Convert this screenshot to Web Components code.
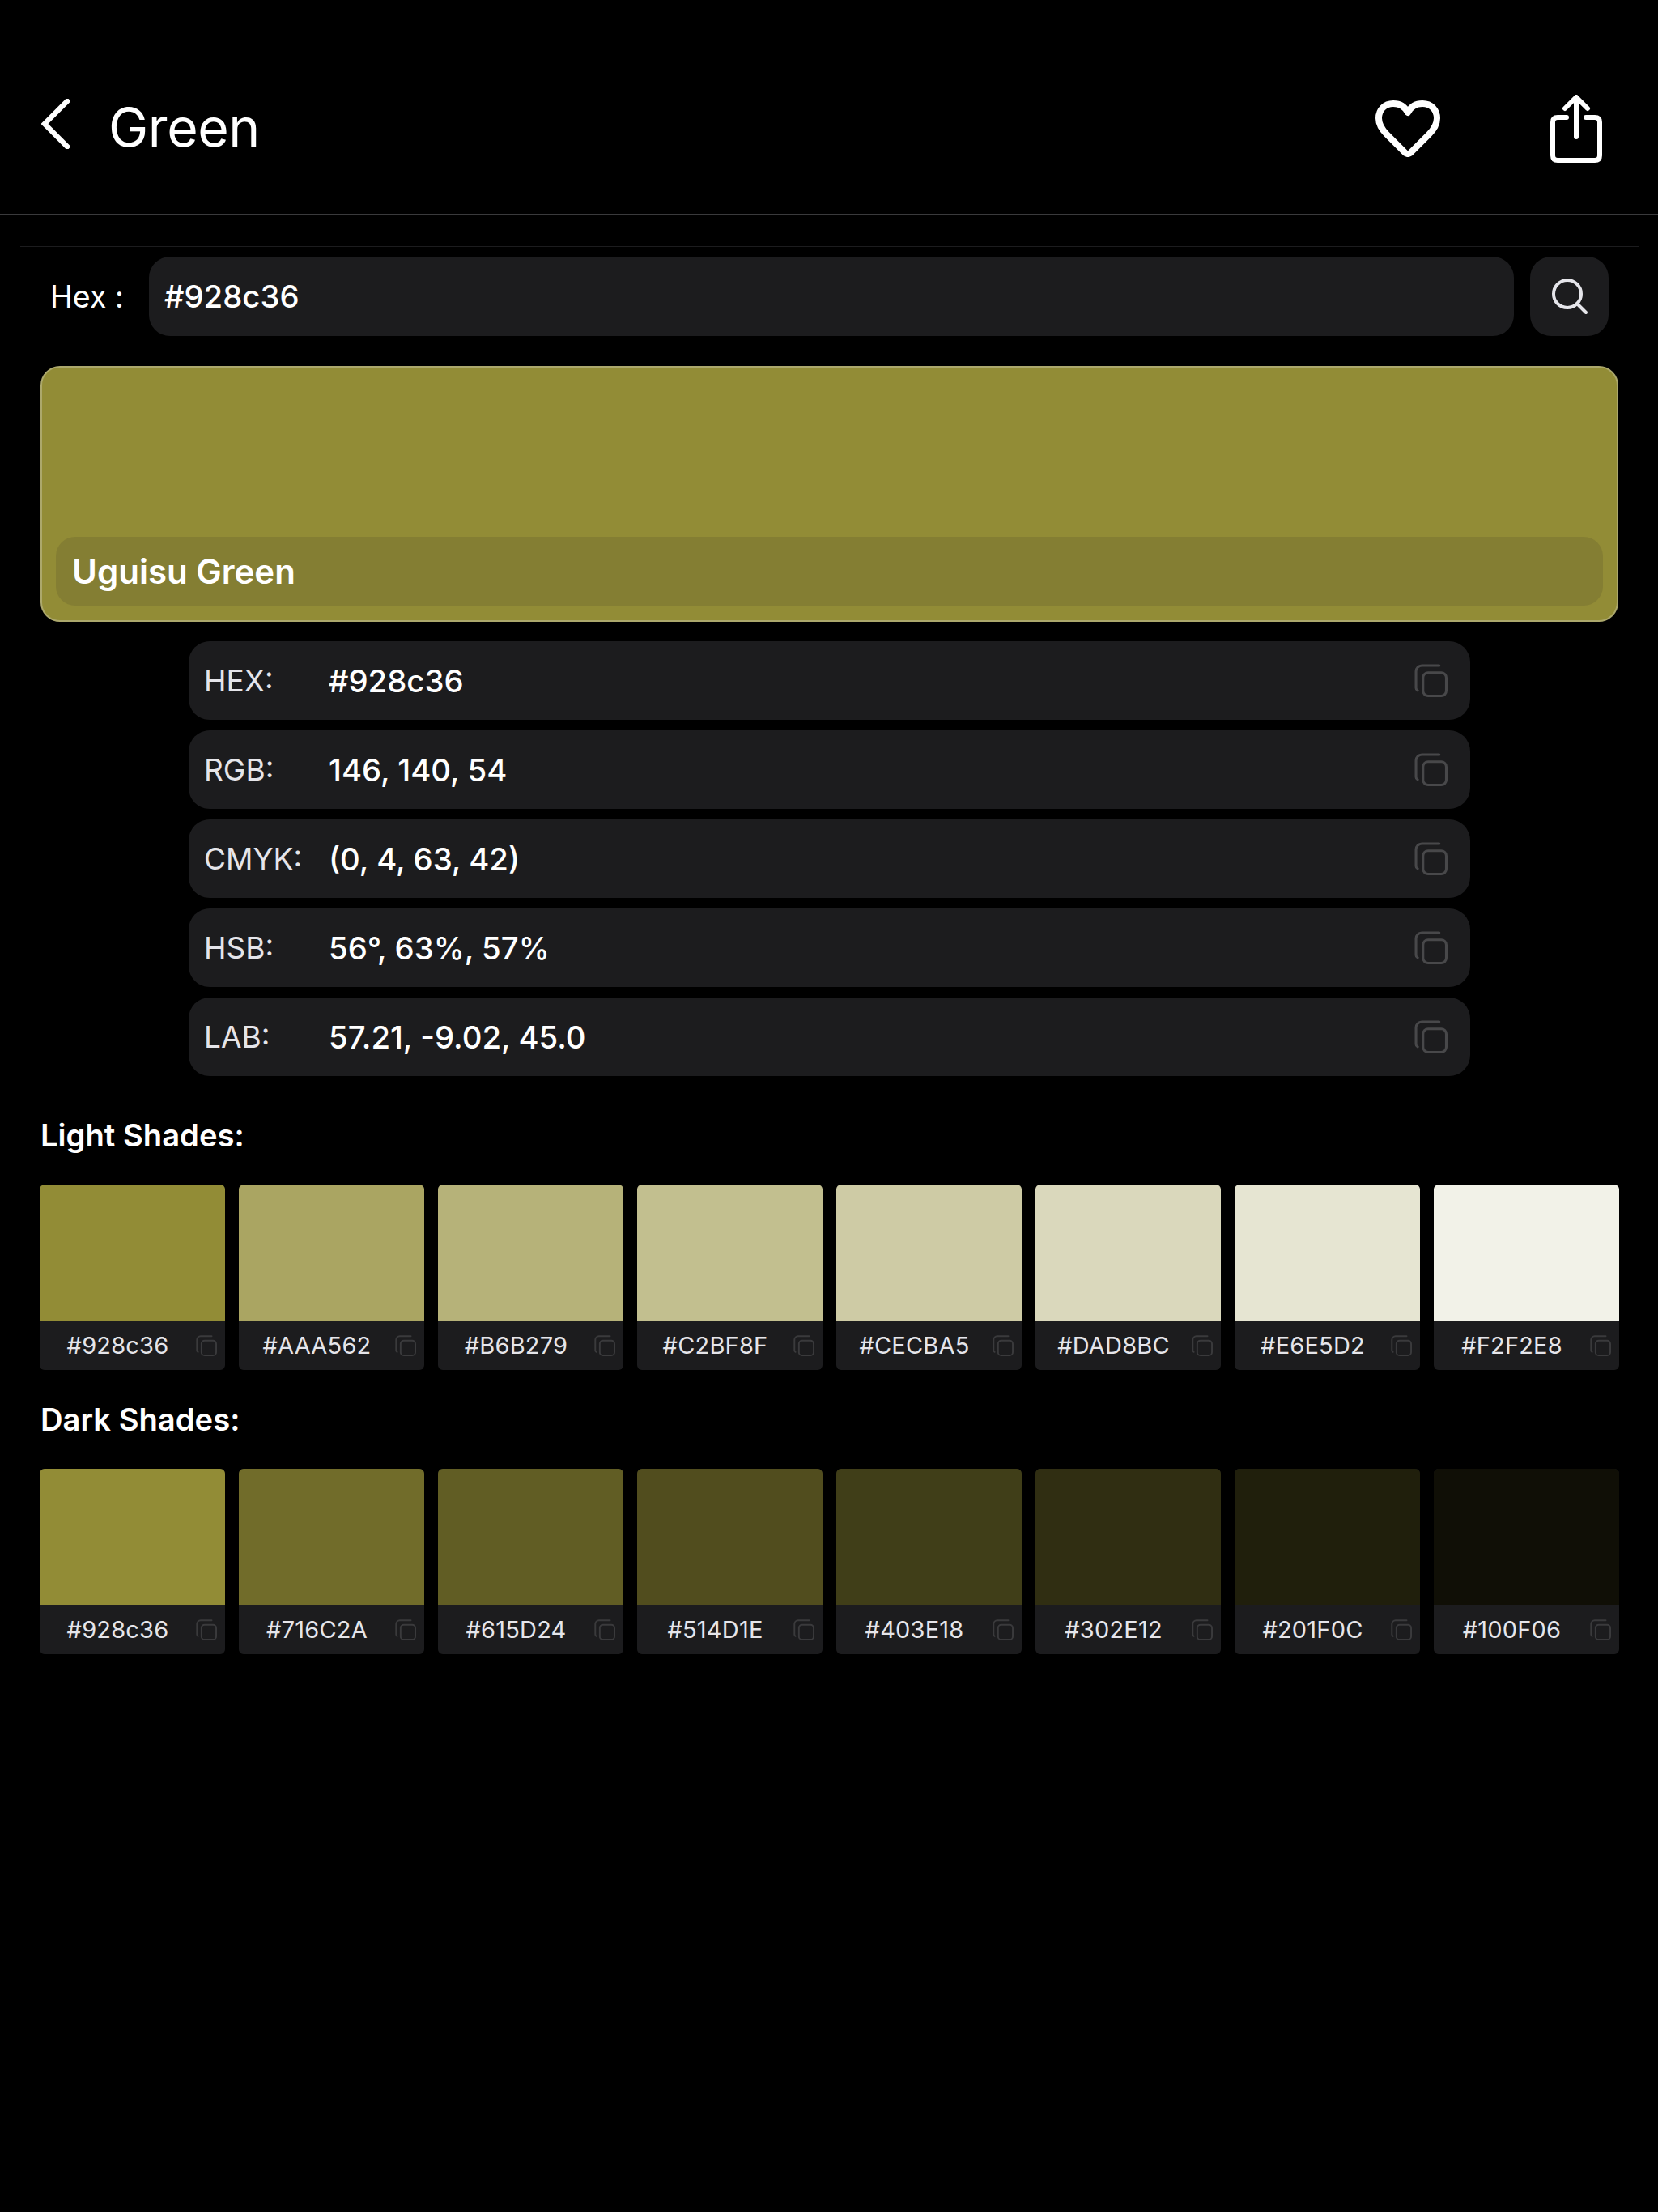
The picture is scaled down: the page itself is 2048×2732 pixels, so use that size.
<!DOCTYPE html>
<html lang="en">
<head>
<meta charset="utf-8">
<title>Green</title>
<style>
    html, body { margin: 0; background: #000; }
    body { width: 2048px; height: 2732px; overflow: hidden; color: #fff; font-family: Inter, "Liberation Sans", sans-serif; }
</style>
</head>
<body>
<color-page>
    <color-header>Green</color-header>
    <hex-search>#928c36</hex-search>
    <color-card>Uguisu Green</color-card>
    <value-list>
        <value-row label="HEX:">#928c36</value-row>
        <value-row label="RGB:">146, 140, 54</value-row>
        <value-row label="CMYK:">(0, 4, 63, 42)</value-row>
        <value-row label="HSB:">56°, 63%, 57%</value-row>
        <value-row label="LAB:">57.21, -9.02, 45.0</value-row>
    </value-list>
    <shade-list>
        <shade-section title="Light Shades:" colors="#928c36 #AAA562 #B6B279 #C2BF8F #CECBA5 #DAD8BC #E6E5D2 #F2F2E8"></shade-section>
        <shade-section title="Dark Shades:" colors="#928c36 #716C2A #615D24 #514D1E #403E18 #302E12 #201F0C #100F06"></shade-section>
    </shade-list>
</color-page>
<script>
const copyIcon = (size) => `
    <svg width="${size}" height="${size}" viewBox="0 0 40 40" fill="none" stroke="currentColor" stroke-width="3" stroke-linecap="round">
        <path d="M30 2H9a7 7 0 0 0-7 7v20q0 2 2 3"/>
        <rect x="10.5" y="10.5" width="28" height="28" rx="6"/>
    </svg>`;

const simple = (name, css, html) => customElements.define(name, class extends HTMLElement {
    constructor() {
        super();
        this.attachShadow({ mode: 'open' }).innerHTML = `<style>${css}</style>${html}`;
    }
});

simple('color-page', `
    :host { display: block; }
`, `<slot></slot>`);

simple('color-header', `
    :host { display: block; }
    header {
        display: flex;
        align-items: center;
        height: 266px;
        box-sizing: border-box;
        padding: 50px 69px 0 51px;
        border-bottom: 2px solid #3a3a3c;
    }
    .back { width: 36px; height: 62px; margin-bottom: 8px; }
    h1 { flex: 1; margin: 0 0 0 47px; font: 400 66px/1 Inter, sans-serif; letter-spacing: -.4px; }
    .heart { width: 80px; height: 70px; margin-top: 3px; }
    .share { width: 64px; height: 84px; margin: 3px 0 0 136px; }
    .sub { height: 1px; margin: 38px 24px 0 25px; background: #1c1c1e; }
`, `
    <header>
        <svg class="back" viewBox="0 0 36 62" fill="none" stroke="#fff" stroke-width="6.5" stroke-linecap="square">
            <path d="M32 3 4 31l28 28"/>
        </svg>
        <h1><slot></slot></h1>
        <svg class="heart" viewBox="0 0 80 70" fill="none" stroke="#fff" stroke-width="8" stroke-linejoin="round">
            <path d="M40 15C36 7 29 4 22 4 11 4 4 12 4 22c0 8 4 14 10 20l23 23q3 2 6 0l23-23c6-6 10-12 10-20C76 12 69 4 58 4c-7 0-14 3-18 11Z"/>
        </svg>
        <svg class="share" viewBox="0 0 64 84" fill="none" stroke="#fff" stroke-width="6" stroke-linecap="round" stroke-linejoin="round">
            <path d="M32 52V4M18 17 32 3l14 14"/>
            <path d="M20 28H9q-6 0-6 6v41q0 6 6 6h46q6 0 6-6V34q0-6-6-6H44"/>
        </svg>
    </header>
    <div class="sub"></div>
`);

simple('hex-search', `
    :host { display: flex; align-items: center; margin: 12px 61px 0 0; }
    label { width: 184px; box-sizing: border-box; padding-left: 62px; font-size: 37.5px; }
    .field {
        flex: 1;
        height: 98px;
        display: flex;
        align-items: center;
        padding-left: 19px;
        border-radius: 26px;
        background: #1c1c1e;
        font-size: 38.3px;
        font-weight: 500;
    }
    button {
        width: 97px;
        height: 98px;
        margin-left: 20px;
        padding: 0;
        border: 0;
        border-radius: 26px;
        background: #1c1c1e;
        display: flex;
        align-items: center;
        justify-content: center;
    }
`, `
    <label>Hex :</label>
    <div class="field"><slot></slot></div>
    <button>
        <svg width="46" height="46" viewBox="0 0 46 46" fill="none" stroke="#e5e5ea" stroke-width="4" stroke-linecap="round">
            <circle cx="20" cy="20" r="17"/><path d="M32 32l11 11"/>
        </svg>
    </button>
`);

simple('color-card', `
    :host { display: block; margin: 37px 49px 0 50px; }
    .card {
        height: 316px;
        box-sizing: border-box;
        display: flex;
        align-items: flex-end;
        padding: 0 17px 18px;
        border: 2px solid #aca86c;
        border-radius: 24px;
        background: #928c36;
    }
    .bar {
        flex: 1;
        height: 85px;
        display: flex;
        align-items: center;
        padding-left: 20px;
        border-radius: 24px;
        background: #847e33;
        font-size: 42px;
        font-weight: 600;
    }
`, `<div class="card"><div class="bar"><slot></slot></div></div>`);

simple('value-list', `
    :host { display: flex; flex-direction: column; gap: 13px; margin: 24px 232px 0 233px; }
`, `<slot></slot>`);

customElements.define('value-row', class ValueRow extends HTMLElement {
    constructor() {
        super();
        this.attachShadow({ mode: 'open' }).innerHTML = `
            <style>
                :host {
                    display: flex;
                    align-items: center;
                    height: 97px;
                    padding: 0 28px 0 19px;
                    border-radius: 26px;
                    background: #1c1c1e;
                }
                .label { width: 154px; font-size: 37px; color: #e5e5ea; }
                .value { flex: 1; font-size: 38.3px; font-weight: 500; }
                svg { color: #48484a; }
            </style>
            <span class="label">${this.getAttribute('label')}</span>
            <span class="value"><slot></slot></span>
            ${copyIcon(41)}`;
    }
});

simple('shade-list', `
    :host { display: flex; flex-direction: column; gap: 38px; padding: 50px 48px 0 49px; }
`, `<slot></slot>`);

customElements.define('shade-section', class ShadeSection extends HTMLElement {
    constructor() {
        super();
        const colors = this.getAttribute('colors').split(' ');
        this.attachShadow({ mode: 'open' }).innerHTML = `
            <style>
                :host { display: block; }
                h2 { margin: 0 0 38px 1px; font: 600 38.2px/46px Inter, sans-serif; }
                .grid { display: grid; grid-template-columns: repeat(8, 1fr); gap: 17px; }
            </style>
            <h2>${this.getAttribute('title')}</h2>
            <div class="grid">${colors.map(c => `<shade-swatch color="${c}"></shade-swatch>`).join('')}</div>`;
    }
});

customElements.define('shade-swatch', class ShadeSwatch extends HTMLElement {
    constructor() {
        super();
        const color = this.getAttribute('color');
        this.attachShadow({ mode: 'open' }).innerHTML = `
            <style>
                :host { display: block; border-radius: 6px; overflow: hidden; background: #1c1c1e; }
                .fill { height: 168px; background: ${color}; }
                .cap { height: 61px; display: flex; align-items: center; padding: 0 10px 0 0; color: #e5e5ea; }
                .hex { flex: 1; text-align: center; font-size: 29px; letter-spacing: .2px; }
                svg { color: #3a3a3c; }
            </style>
            <div class="fill"></div>
            <div class="cap"><span class="hex">${color}</span>${copyIcon(26)}</div>`;
    }
});
</script>
</body>
</html>
